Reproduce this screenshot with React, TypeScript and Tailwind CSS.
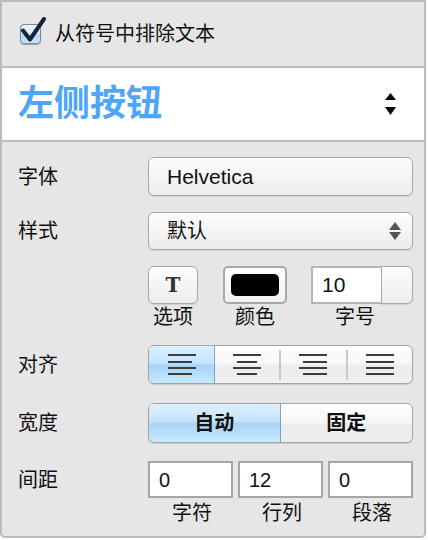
import React from "react";

function AlignIcon({ kind }: { kind: "left" | "center" | "right" | "justify" }) {
  const ys = [0, 7, 13, 19];
  const lines = ys.map((y, i) => {
    const short = i % 2 === 1;
    let x1 = 0;
    let x2 = 28;
    if (kind === "left" && short) x2 = 24;
    if (kind === "center" && short) {
      x1 = 4;
      x2 = 24;
    }
    if (kind === "right" && short) x1 = 4;
    return <rect key={i} x={x1} y={y} width={x2 - x1} height={2} fill="#3d3d3d" />;
  });
  return (
    <svg width="28" height="21" viewBox="0 0 28 21">
      {lines}
    </svg>
  );
}

function Checkbox() {
  return (
    <div className="relative w-[21px] h-[20px]">
      <div className="w-[21px] h-[20px] rounded-[4px] border border-[#7a8797] bg-[linear-gradient(to_bottom,#eef6fd_0%,#d6e9fa_48%,#b3d5f4_52%,#cde6fb_100%)] shadow-[0_1px_1px_rgba(0,0,0,0.3)]" />
      <svg className="absolute left-0 top-[-7px]" width="28" height="28" viewBox="0 0 28 28">
        <path d="M3 13.5 L10 22.5 L24 2" stroke="#16243b" strokeWidth="4" fill="none" strokeLinecap="round" strokeLinejoin="round" />
      </svg>
    </div>
  );
}

export default function App() {
  return (
    <div className="w-[426px] h-[538px] border-2 border-[#bcbcbc] rounded-b-[5px] bg-[#e6e6e6] flex flex-col overflow-hidden font-['Liberation_Sans','Noto_Sans_CJK_SC',sans-serif] text-[#111]">
      {/* top checkbox row */}
      <div className="h-[66px] shrink-0 flex items-center pl-[18px] border-b-2 border-[#bcbcbc]">
        <Checkbox />
        <span className="ml-[14px] text-[20px] leading-[20px]">从符号中排除文本</span>
      </div>

      {/* title row */}
      <div className="h-[74px] shrink-0 bg-white border-b-2 border-[#bcbcbc] flex items-center justify-between pl-[16px] pr-[28px]">
        <span className="text-[36px] leading-[36px] font-bold text-[#4ea6f8]">左侧按钮</span>
        <svg width="11" height="22" viewBox="0 0 11 22">
          <polygon points="5.5,0 0,7 11,7" fill="#000" />
          <polygon points="0,14 11,14 5.5,22" fill="#000" />
        </svg>
      </div>

      {/* properties */}
      <div className="flex-1 flex flex-col pt-[15px] pl-[16px] pr-[11px] text-[20px] leading-[20px]">
        {/* 字体 */}
        <div className="flex items-center h-[39px]">
          <div className="w-[130px]">字体</div>
          <div className="flex-1 h-[39px] rounded-[6px] border border-[#a8a8a8] bg-[linear-gradient(to_bottom,#fdfdfd,#ececec)] shadow-[0_1px_1px_rgba(0,0,0,0.1)] flex items-center pl-[18px] text-[21px]">
            Helvetica
          </div>
        </div>

        {/* 样式 */}
        <div className="flex items-center h-[38px] mt-[16px]">
          <div className="w-[130px]">样式</div>
          <div className="flex-1 h-[38px] rounded-[6px] border border-[#a8a8a8] bg-[linear-gradient(to_bottom,#fdfdfd,#ececec)] shadow-[0_1px_1px_rgba(0,0,0,0.1)] flex items-center justify-between pl-[18px] pr-[11px]">
            <span>默认</span>
            <svg width="12" height="18" viewBox="0 0 12 18">
              <polygon points="6,0 0,8 12,8" fill="#555" />
              <polygon points="0,10 12,10 6,18" fill="#555" />
            </svg>
          </div>
        </div>

        {/* 选项 / 颜色 / 字号 */}
        <div className="flex mt-[16px]">
          <div className="w-[130px]" />
          <div className="flex">
            <div className="w-[50px] flex flex-col items-center">
              <div className="w-[50px] h-[38px] rounded-[6px] border border-[#a8a8a8] bg-[linear-gradient(to_bottom,#fdfdfd,#ececec)] shadow-[0_1px_1px_rgba(0,0,0,0.1)] flex items-center justify-center">
                <span className="font-['DejaVu_Serif',serif] font-bold text-[20px] leading-[20px] text-[#333]">T</span>
              </div>
              <div className="mt-[3px] whitespace-nowrap">选项</div>
            </div>
            <div className="w-[64px] ml-[25px] flex flex-col items-center">
              <div className="w-[64px] h-[38px] rounded-[5px] border-2 border-[#a9a9a9] bg-[linear-gradient(to_bottom,#ffffff,#f0f0f0)] flex items-center justify-center">
                <div className="w-[48px] h-[22px] rounded-[5px] bg-black" />
              </div>
              <div className="mt-[3px] whitespace-nowrap">颜色</div>
            </div>
            <div className="w-[102px] ml-[24px] flex flex-col items-center">
              <div className="w-[102px] h-[38px] flex">
                <div className="w-[70px] h-[38px] bg-white border-2 border-[#b5b5b5] border-r-0 flex items-center pl-[9px] text-[21px]">
                  10
                </div>
                <div className="flex-1 h-[38px] rounded-r-[6px] border border-[#a8a8a8] bg-[linear-gradient(to_bottom,#fdfdfd,#ececec)] shadow-[0_1px_1px_rgba(0,0,0,0.1)]" />
              </div>
              <div className="mt-[3px] pr-[14px] whitespace-nowrap">字号</div>
            </div>
          </div>
        </div>

        {/* 对齐 */}
        <div className="flex items-center h-[39px] mt-[18px]">
          <div className="w-[130px]">对齐</div>
          <div className="flex-1 h-[39px] rounded-[6px] border border-[#a3a3a3] overflow-hidden flex bg-[linear-gradient(to_bottom,#ffffff,#f6f6f6_50%,#ececec_52%,#efefef)] shadow-[0_1px_1px_rgba(0,0,0,0.12)]">
            <div className="w-[66px] border-r border-[#7f9cd6] bg-[linear-gradient(to_bottom,#dcf0fe_0%,#c6e4fb_45%,#a8d4f8_52%,#c6eafd_100%)] flex items-center justify-center">
              <AlignIcon kind="left" />
            </div>
            <div className="flex-1 flex items-center justify-center">
              <AlignIcon kind="center" />
            </div>
            <div className="w-[2px] h-[30px] self-center bg-[#c9c9c9]" />
            <div className="flex-1 flex items-center justify-center">
              <AlignIcon kind="right" />
            </div>
            <div className="w-[2px] h-[30px] self-center bg-[#c9c9c9]" />
            <div className="flex-1 flex items-center justify-center">
              <AlignIcon kind="justify" />
            </div>
          </div>
        </div>

        {/* 宽度 */}
        <div className="flex items-center h-[40px] mt-[19px]">
          <div className="w-[130px]">宽度</div>
          <div className="flex-1 h-[40px] rounded-[6px] border border-[#a3a3a3] overflow-hidden grid grid-cols-2 bg-[linear-gradient(to_bottom,#ffffff,#f6f6f6_50%,#ececec_52%,#efefef)] shadow-[0_1px_1px_rgba(0,0,0,0.12)] font-bold">
            <div className="border-r border-[#7f9cd6] bg-[linear-gradient(to_bottom,#dcf0fe_0%,#c6e4fb_45%,#a8d4f8_52%,#c6eafd_100%)] flex items-center justify-center">
              自动
            </div>
            <div className="flex items-center justify-center">固定</div>
          </div>
        </div>

        {/* 间距 */}
        <div className="flex items-start mt-[18px]">
          <div className="w-[130px] h-[37px] flex items-center">间距</div>
          <div className="flex-1 grid grid-cols-3 gap-x-[5px]">
            {[
              ["0", "字符"],
              ["12", "行列"],
              ["0", "段落"],
            ].map(([v, l], i) => (
              <div key={i} className="flex flex-col items-center">
                <div className="w-full h-[37px] bg-white border-2 border-[#a6a6a6] flex items-center pl-[9px] text-[20px]">
                  {v}
                </div>
                <div className="mt-[5px] pl-[3px] whitespace-nowrap">{l}</div>
              </div>
            ))}
          </div>
        </div>
      </div>
    </div>
  );
}
